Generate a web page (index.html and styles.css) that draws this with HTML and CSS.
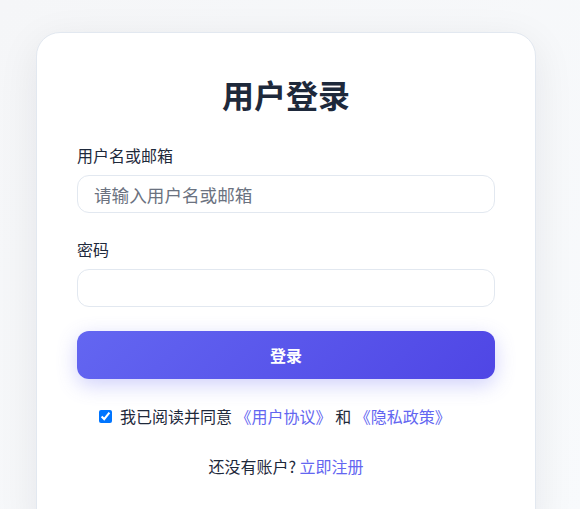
FILE: index.html
```html
<!DOCTYPE html>
<html lang="zh-CN">
  <head>
    <meta charset="UTF-8" />
    <title>用户登录</title>
    <link rel="stylesheet" href="styles.css">
  </head>
  <body>
    <div class="login-card">
      <h1 class="title">用户登录</h1>
      <form class="login-form">
        <div class="field">
          <label for="username">用户名或邮箱</label>
          <input id="username" type="text" placeholder="请输入用户名或邮箱" />
        </div>
        <div class="field">
          <label for="password">密码</label>
          <input id="password" type="password" />
        </div>
        <button type="button" class="login-btn">登录</button>
        <div class="agree">
          <input id="agree" type="checkbox" checked />
          <label for="agree">我已阅读并同意 <a href="#">《用户协议》</a> 和 <a href="#">《隐私政策》</a></label>
        </div>
        <p class="register">还没有账户? <a href="#">立即注册</a></p>
      </form>
    </div>
  </body>
</html>
```

FILE: styles.css
```css
body {
  margin: 0;
  padding: 32px 8px 0 0;
  min-height: 509px;
  box-sizing: border-box;
  font-family: "Noto Sans CJK SC", "Liberation Sans", sans-serif;
  background: linear-gradient(135deg, #f5f6f8 0%, #f8fafc 100%);
  display: flex;
  justify-content: center;
  align-items: flex-start;
  color: #1e293b;
}

.login-card {
  width: 500px;
  box-sizing: border-box;
  background: #fff;
  border: 1px solid #e2e8f0;
  border-radius: 24px;
  padding: 37px 40px 60px;
  box-shadow: 0 10px 40px rgba(15, 23, 42, 0.08);
}

.title {
  margin: 0 0 25px;
  text-align: center;
  font-size: 32px;
  font-weight: 700;
  line-height: 48px;
  color: #1e293b;
}

.field {
  display: flex;
  flex-direction: column;
  margin-bottom: 24px;
}

.field label {
  font-size: 16px;
  line-height: 24px;
  margin-bottom: 8px;
  color: #1e293b;
}

.field input {
  height: 38px;
  box-sizing: border-box;
  border: 1px solid #e2e8f0;
  border-radius: 12px;
  padding: 0 16px;
  font-family: inherit;
  font-size: 17.6px;
  color: #1e293b;
  outline: none;
}

.field input::placeholder {
  color: #6b7280;
}

.login-btn {
  display: block;
  width: 100%;
  height: 48px;
  border: none;
  border-radius: 12px;
  background: linear-gradient(135deg, #6366f1 0%, #4f46e5 100%);
  color: #fff;
  font-family: inherit;
  font-size: 16px;
  font-weight: 700;
  box-shadow: 0 6px 20px rgba(99, 102, 241, 0.3);
}

.agree {
  display: flex;
  align-items: center;
  padding-left: 22px;
  margin-top: 25px;
  font-size: 16px;
  line-height: 24px;
}

.agree input {
  width: 13px;
  height: 13px;
  margin: 0 8px 0 0;
}

a {
  color: #6366f1;
  text-decoration: none;
}

.register {
  margin: 26px 0 0;
  text-align: center;
  font-size: 16px;
  line-height: 24px;
}
```
